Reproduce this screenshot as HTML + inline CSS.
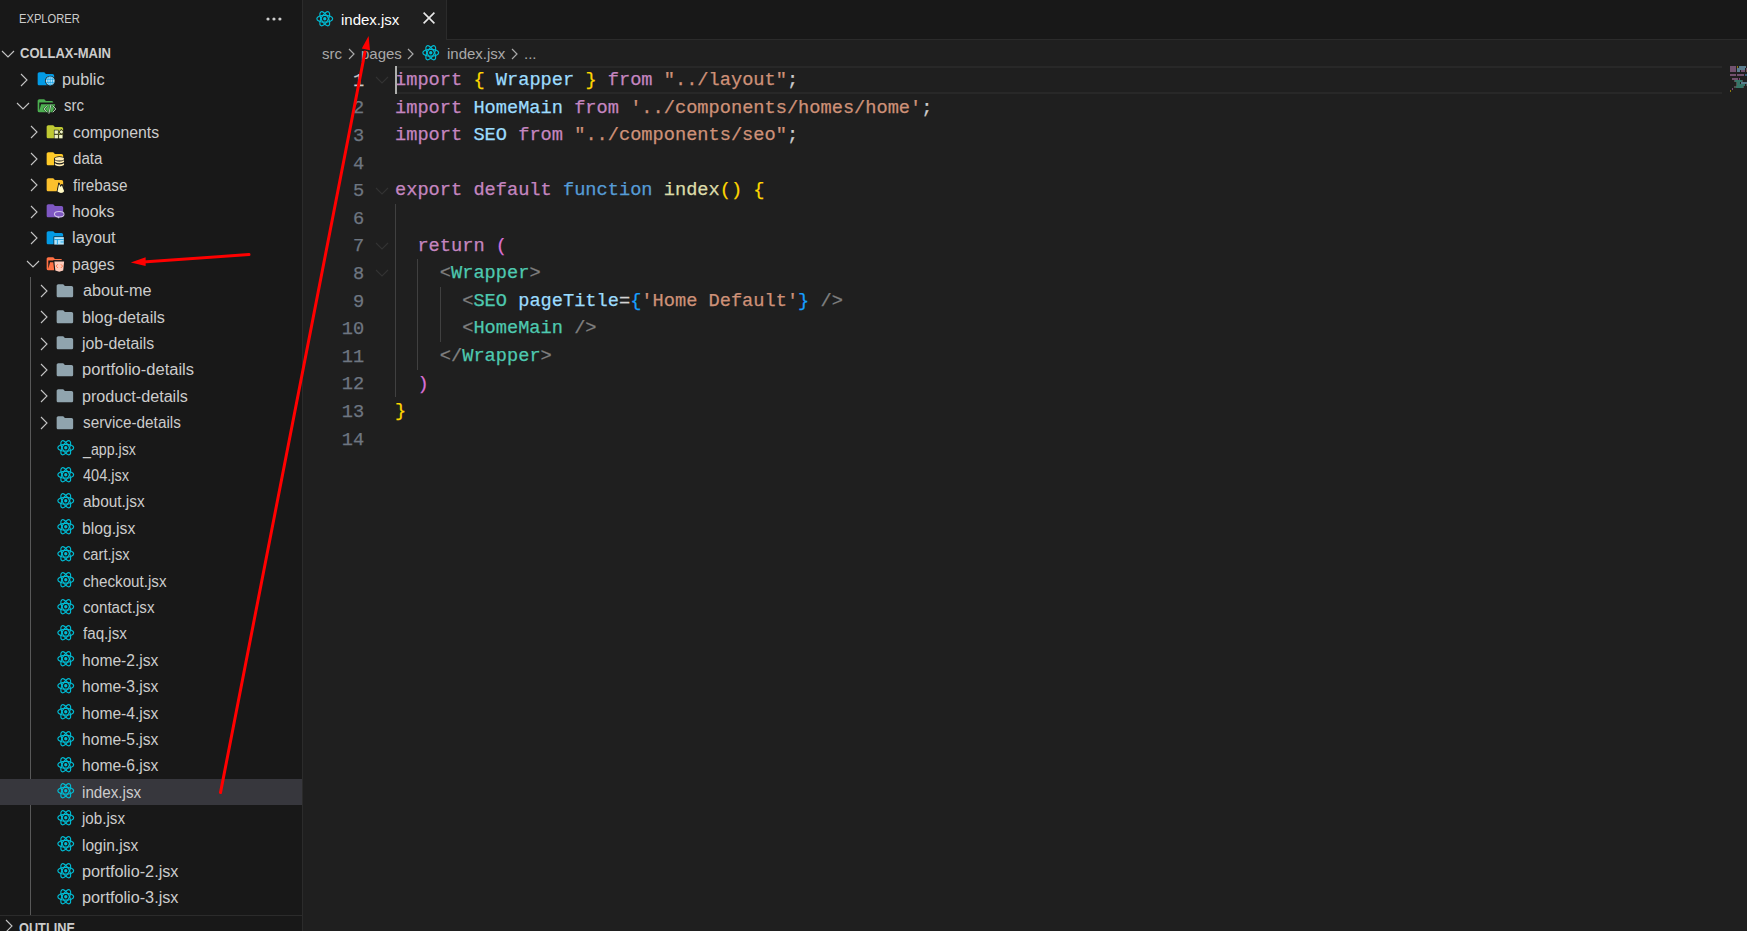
<!DOCTYPE html>
<html><head><meta charset="utf-8"><style>
html,body{margin:0;padding:0;width:1747px;height:931px;overflow:hidden;background:#1F1F1F;}
body{position:relative;font-family:"Liberation Sans",sans-serif;}
.ic{position:absolute;display:block;overflow:visible;}
#side{position:absolute;left:0;top:0;width:302px;height:931px;background:#181818;border-right:1px solid #2B2B2B;overflow:hidden;}
.t{position:absolute;height:26.4px;line-height:26.4px;font-size:16px;color:#CCCCCC;white-space:nowrap;transform-origin:0 0;}
.sel{position:absolute;left:0;width:302px;height:26.4px;background:#37373D;}
#hdr{position:absolute;top:9.4px;font-size:12.5px;color:#CCCCCC;line-height:20px;transform-origin:0 0;white-space:nowrap;}
#root{position:absolute;top:42.3px;font-size:14px;font-weight:bold;color:#CCCCCC;line-height:22px;transform-origin:0 0;white-space:nowrap;}
#outline{position:absolute;left:0;top:915px;width:302px;height:16px;border-top:1px solid #2B2B2B;}
#tabs{position:absolute;left:303px;top:0;right:0;height:39px;background:#181818;border-bottom:1px solid #2B2B2B;}
#tab{position:absolute;left:303px;top:0;width:143px;height:40px;background:#1F1F1F;border-right:1px solid #2B2B2B;}
.bc{position:absolute;top:43px;line-height:22px;font-size:15px;color:#A9A9A9;white-space:nowrap;}
.cl{position:absolute;left:395px;height:27.6px;line-height:27.6px;font-family:"Liberation Mono",monospace;font-size:18.67px;white-space:pre;padding-top:0.9px;box-sizing:border-box;-webkit-text-stroke:0.25px currentColor;}
.ln{position:absolute;left:300px;width:64.2px;text-align:right;height:27.6px;line-height:27.6px;font-family:"Liberation Mono",monospace;font-size:18.67px;color:#6E7681;padding-top:1.5px;box-sizing:border-box;-webkit-text-stroke:0.25px currentColor;}
.ln.act{color:#CCCCCC;}
.g{position:absolute;width:1px;background:#404040;}
#curline{position:absolute;left:395px;top:66.2px;width:1327px;height:27.6px;box-sizing:border-box;border-top:2px solid #282828;border-bottom:2px solid #282828;}
#cursor{position:absolute;left:395px;top:66.2px;width:2px;height:27.6px;background:#AEAFAD;}
#mm div{position:absolute;width:1px;height:1.6px;opacity:.5;}
</style></head><body>
<div id="side">
<div id="hdr" style="left:18.91px;transform:scaleX(0.894)">EXPLORER</div>
<svg class="ic" width="20" height="6" style="left:265px;top:15.5px"><circle cx="3" cy="3" r="1.6" fill="#CCCCCC"/><circle cx="8.95" cy="3" r="1.6" fill="#CCCCCC"/><circle cx="14.9" cy="3" r="1.6" fill="#CCCCCC"/></svg>
<svg class="ic" width="16" height="12" viewBox="0 0 16 12" style="left:-0.50px;top:48.00px"><path d="M2.00 3L8 9.00L14.00 3" fill="none" stroke="#C5C5C5" stroke-width="1.1"/></svg>
<div id="root" style="left:19.8px;transform:scaleX(0.9286)">COLLAX-MAIN</div>
<div class="g" style="left:30px;top:277px;height:638px;background:#585858"></div>
<svg class="ic" width="12" height="16" viewBox="0 0 12 16" style="left:18.00px;top:71.60px"><path d="M3 2.00L9.00 8L3 14.00" fill="none" stroke="#C5C5C5" stroke-width="1.1"/></svg>
<svg class="ic" viewBox="0 0 24 24" preserveAspectRatio="none" width="19.80" height="19.50" style="left:36.35px;top:69.40px"><path d="M10 4H4c-1.11 0-2 .89-2 2v12c0 1.1.9 2 2 2h16c1.1 0 2-.9 2-2V8a2 2 0 0 0-2-2h-8l-2-2z" fill="#039BE5"/><circle cx="17.2" cy="14.6" r="6.3" fill="#181818"/><circle cx="17.2" cy="14.6" r="5.4" fill="#B3E5FC"/><g stroke="#039BE5" stroke-width="0.8" fill="none"><path d="M12 12.7h10.4M12 16.5h10.4M17.2 9.3v10.6"/><ellipse cx="17.2" cy="14.6" rx="2.9" ry="5.3"/></g></svg>
<div class="t" style="left:62.48px;top:66.90px;transform:scaleX(1.0195)">public</div>
<svg class="ic" width="16" height="12" viewBox="0 0 16 12" style="left:15.40px;top:99.70px"><path d="M2.00 3L8 9.00L14.00 3" fill="none" stroke="#C5C5C5" stroke-width="1.1"/></svg>
<svg class="ic" viewBox="0 0 24 24" preserveAspectRatio="none" width="19.80" height="19.50" style="left:36.35px;top:95.80px"><path d="M19 20H4a2 2 0 0 1-2-2V6c0-1.11.89-2 2-2h6l2 2h7a2 2 0 0 1 2 2H4v10l2.14-8h17.07l-2.28 8.5c-.23.87-1.01 1.5-1.93 1.5z" fill="#4CAF50"/><path d="M13.4 12l-3.6 4 3.6 4M20.4 12l3.6 4-3.6 4M18.2 10.2l-2.6 11.6" stroke="#181818" stroke-width="2.2" fill="none" opacity="0.6"/><path d="M13.4 12l-3.6 4 3.6 4M20.4 12l3.6 4-3.6 4M18.2 10.2l-2.6 11.6" stroke="#C8E6C9" stroke-width="1.1" fill="none"/></svg>
<div class="t" style="left:63.50px;top:93.30px;transform:scaleX(0.9381)">src</div>
<svg class="ic" width="12" height="16" viewBox="0 0 12 16" style="left:28.00px;top:124.40px"><path d="M3 2.00L9.00 8L3 14.00" fill="none" stroke="#C5C5C5" stroke-width="1.1"/></svg>
<svg class="ic" viewBox="0 0 24 24" preserveAspectRatio="none" width="19.80" height="19.50" style="left:45.45px;top:122.20px"><path d="M10 4H4c-1.11 0-2 .89-2 2v12c0 1.1.9 2 2 2h16c1.1 0 2-.9 2-2V8a2 2 0 0 0-2-2h-8l-2-2z" fill="#C0CA33"/><g fill="#181818"><rect x="10.8" y="9.6" width="5.6" height="5.6"/><rect x="10.8" y="15.2" width="5.6" height="5.6"/><rect x="16.4" y="15.2" width="6.4" height="5.6"/><path d="M19.8 8.6l3.6 3.6-3.6 3.6-3.6-3.6z"/></g><g fill="#F0F4C3"><rect x="11.5" y="10.3" width="4.2" height="4.2"/><rect x="11.5" y="15.9" width="4.2" height="4.2"/><rect x="17.1" y="15.9" width="4.2" height="4.2"/><path d="M19.8 9.8l2.4 2.4-2.4 2.4-2.4-2.4z"/></g></svg>
<div class="t" style="left:72.80px;top:119.70px;transform:scaleX(0.9874)">components</div>
<svg class="ic" width="12" height="16" viewBox="0 0 12 16" style="left:28.00px;top:150.80px"><path d="M3 2.00L9.00 8L3 14.00" fill="none" stroke="#C5C5C5" stroke-width="1.1"/></svg>
<svg class="ic" viewBox="0 0 24 24" preserveAspectRatio="none" width="19.80" height="19.50" style="left:45.45px;top:148.60px"><path d="M10 4H4c-1.11 0-2 .89-2 2v12c0 1.1.9 2 2 2h16c1.1 0 2-.9 2-2V8a2 2 0 0 0-2-2h-8l-2-2z" fill="#FFCA28"/><g fill="#181818"><ellipse cx="17.5" cy="12" rx="6.6" ry="3.2"/><rect x="10.9" y="12" width="13.2" height="9"/><ellipse cx="17.5" cy="21" rx="6.6" ry="3.2"/></g><g fill="#FFECB3"><ellipse cx="17.5" cy="12" rx="5.6" ry="2.3"/><path d="M11.9 13.9q5.6 3.2 11.2 0v2q-5.6 3.2-11.2 0z"/><path d="M11.9 17.6q5.6 3.2 11.2 0v2q-5.6 3.2-11.2 0z"/></g></svg>
<div class="t" style="left:72.80px;top:146.10px;transform:scaleX(0.9438)">data</div>
<svg class="ic" width="12" height="16" viewBox="0 0 12 16" style="left:28.00px;top:177.20px"><path d="M3 2.00L9.00 8L3 14.00" fill="none" stroke="#C5C5C5" stroke-width="1.1"/></svg>
<svg class="ic" viewBox="0 0 24 24" preserveAspectRatio="none" width="19.80" height="19.50" style="left:45.45px;top:175.00px"><path d="M10 4H4c-1.11 0-2 .89-2 2v12c0 1.1.9 2 2 2h16c1.1 0 2-.9 2-2V8a2 2 0 0 0-2-2h-8l-2-2z" fill="#FBC02D"/><path d="M14.6 20.8L16.8 9.6l2.2 4 1.6-2.4 3.2 8.4q-1 2.4-4.4 2.6q-2.4 0-4.8-1.4z" fill="#181818" stroke="#181818" stroke-width="1.2" stroke-linejoin="round"/><path d="M15.2 20.4l1.8-9.2 2 3.6 1.5-2.2 2.7 7.3q-0.9 2-3.8 2.2q-2 0-4.2-1.7z" fill="#FFF9C4"/></svg>
<div class="t" style="left:72.80px;top:172.50px;transform:scaleX(0.9561)">firebase</div>
<svg class="ic" width="12" height="16" viewBox="0 0 12 16" style="left:28.00px;top:203.60px"><path d="M3 2.00L9.00 8L3 14.00" fill="none" stroke="#C5C5C5" stroke-width="1.1"/></svg>
<svg class="ic" viewBox="0 0 24 24" preserveAspectRatio="none" width="19.80" height="19.50" style="left:45.45px;top:201.40px"><path d="M10 4H4c-1.11 0-2 .89-2 2v12c0 1.1.9 2 2 2h16c1.1 0 2-.9 2-2V8a2 2 0 0 0-2-2h-8l-2-2z" fill="#7E57C2"/><ellipse cx="17.2" cy="16.4" rx="5.8" ry="3.4" fill="none" stroke="#D1C4E9" stroke-width="1.3"/><path d="M15.6 19.4l1.6 1.8" stroke="#D1C4E9" stroke-width="1.3"/></svg>
<div class="t" style="left:71.80px;top:198.90px;transform:scaleX(0.9952)">hooks</div>
<svg class="ic" width="12" height="16" viewBox="0 0 12 16" style="left:28.00px;top:230.00px"><path d="M3 2.00L9.00 8L3 14.00" fill="none" stroke="#C5C5C5" stroke-width="1.1"/></svg>
<svg class="ic" viewBox="0 0 24 24" preserveAspectRatio="none" width="19.80" height="19.50" style="left:45.45px;top:227.80px"><path d="M10 4H4c-1.11 0-2 .89-2 2v12c0 1.1.9 2 2 2h16c1.1 0 2-.9 2-2V8a2 2 0 0 0-2-2h-8l-2-2z" fill="#039BE5"/><rect x="10.4" y="10.4" width="13.2" height="10.8" fill="#181818"/><rect x="11.2" y="11.2" width="11.6" height="9.2" fill="#B3E5FC"/><path d="M11.2 14.2h11.6M15 14.2v6.2M18.8 17.2h4" stroke="#039BE5" stroke-width="1"/></svg>
<div class="t" style="left:71.78px;top:225.30px;transform:scaleX(1.0214)">layout</div>
<svg class="ic" width="16" height="12" viewBox="0 0 16 12" style="left:25.40px;top:258.10px"><path d="M2.00 3L8 9.00L14.00 3" fill="none" stroke="#C5C5C5" stroke-width="1.1"/></svg>
<svg class="ic" viewBox="0 0 24 24" preserveAspectRatio="none" width="19.80" height="19.50" style="left:45.45px;top:254.20px"><path d="M19 20H4a2 2 0 0 1-2-2V6c0-1.11.89-2 2-2h6l2 2h7a2 2 0 0 1 2 2H4v10l2.14-8h17.07l-2.28 8.5c-.23.87-1.01 1.5-1.93 1.5z" fill="#FF7043"/><path d="M10.6 8.4h13.4l-1.3 12.4-5.4 1.8-5.4-1.8z" fill="#181818" stroke="#181818" stroke-width="1.4" stroke-linejoin="round"/><path d="M11.4 9.1h11.8l-1.1 11.1-4.8 1.6-4.8-1.6z" fill="#FFCCBC"/><path d="M15.6 12.6l-2.2 2.3 2.2 2.3M19.2 12.6l2.2 2.3-2.2 2.3" stroke="#FF7043" stroke-width="1.1" fill="none"/></svg>
<div class="t" style="left:71.82px;top:251.70px;transform:scaleX(0.9786)">pages</div>
<svg class="ic" width="12" height="16" viewBox="0 0 12 16" style="left:38.00px;top:282.80px"><path d="M3 2.00L9.00 8L3 14.00" fill="none" stroke="#C5C5C5" stroke-width="1.1"/></svg>
<svg class="ic" viewBox="0 0 24 24" preserveAspectRatio="none" width="19.80" height="19.50" style="left:55.45px;top:280.60px"><path d="M10 4H4c-1.11 0-2 .89-2 2v12c0 1.1.9 2 2 2h16c1.1 0 2-.9 2-2V8a2 2 0 0 0-2-2h-8l-2-2z" fill="#90A4AE"/></svg>
<div class="t" style="left:82.70px;top:278.10px;transform:scaleX(1.0134)">about-me</div>
<svg class="ic" width="12" height="16" viewBox="0 0 12 16" style="left:38.00px;top:309.20px"><path d="M3 2.00L9.00 8L3 14.00" fill="none" stroke="#C5C5C5" stroke-width="1.1"/></svg>
<svg class="ic" viewBox="0 0 24 24" preserveAspectRatio="none" width="19.80" height="19.50" style="left:55.45px;top:307.00px"><path d="M10 4H4c-1.11 0-2 .89-2 2v12c0 1.1.9 2 2 2h16c1.1 0 2-.9 2-2V8a2 2 0 0 0-2-2h-8l-2-2z" fill="#90A4AE"/></svg>
<div class="t" style="left:81.69px;top:304.50px;transform:scaleX(1.0136)">blog-details</div>
<svg class="ic" width="12" height="16" viewBox="0 0 12 16" style="left:38.00px;top:335.60px"><path d="M3 2.00L9.00 8L3 14.00" fill="none" stroke="#C5C5C5" stroke-width="1.1"/></svg>
<svg class="ic" viewBox="0 0 24 24" preserveAspectRatio="none" width="19.80" height="19.50" style="left:55.45px;top:333.40px"><path d="M10 4H4c-1.11 0-2 .89-2 2v12c0 1.1.9 2 2 2h16c1.1 0 2-.9 2-2V8a2 2 0 0 0-2-2h-8l-2-2z" fill="#90A4AE"/></svg>
<div class="t" style="left:82.49px;top:330.90px;transform:scaleX(0.9905)">job-details</div>
<svg class="ic" width="12" height="16" viewBox="0 0 12 16" style="left:38.00px;top:362.00px"><path d="M3 2.00L9.00 8L3 14.00" fill="none" stroke="#C5C5C5" stroke-width="1.1"/></svg>
<svg class="ic" viewBox="0 0 24 24" preserveAspectRatio="none" width="19.80" height="19.50" style="left:55.45px;top:359.80px"><path d="M10 4H4c-1.11 0-2 .89-2 2v12c0 1.1.9 2 2 2h16c1.1 0 2-.9 2-2V8a2 2 0 0 0-2-2h-8l-2-2z" fill="#90A4AE"/></svg>
<div class="t" style="left:81.67px;top:357.30px;transform:scaleX(1.0327)">portfolio-details</div>
<svg class="ic" width="12" height="16" viewBox="0 0 12 16" style="left:38.00px;top:388.40px"><path d="M3 2.00L9.00 8L3 14.00" fill="none" stroke="#C5C5C5" stroke-width="1.1"/></svg>
<svg class="ic" viewBox="0 0 24 24" preserveAspectRatio="none" width="19.80" height="19.50" style="left:55.45px;top:386.20px"><path d="M10 4H4c-1.11 0-2 .89-2 2v12c0 1.1.9 2 2 2h16c1.1 0 2-.9 2-2V8a2 2 0 0 0-2-2h-8l-2-2z" fill="#90A4AE"/></svg>
<div class="t" style="left:81.69px;top:383.70px;transform:scaleX(1.0087)">product-details</div>
<svg class="ic" width="12" height="16" viewBox="0 0 12 16" style="left:38.00px;top:414.80px"><path d="M3 2.00L9.00 8L3 14.00" fill="none" stroke="#C5C5C5" stroke-width="1.1"/></svg>
<svg class="ic" viewBox="0 0 24 24" preserveAspectRatio="none" width="19.80" height="19.50" style="left:55.45px;top:412.60px"><path d="M10 4H4c-1.11 0-2 .89-2 2v12c0 1.1.9 2 2 2h16c1.1 0 2-.9 2-2V8a2 2 0 0 0-2-2h-8l-2-2z" fill="#90A4AE"/></svg>
<div class="t" style="left:82.70px;top:410.10px;transform:scaleX(0.9569)">service-details</div>
<svg class="ic" viewBox="0 0 32 32" width="19.50" height="19.50" style="left:55.75px;top:438.25px"><g fill="none" stroke="#00BCD4" stroke-width="1.9"><ellipse cx="16" cy="16" rx="13" ry="5.6"/><ellipse cx="16" cy="16" rx="13" ry="5.6" transform="rotate(60 16 16)"/><ellipse cx="16" cy="16" rx="13" ry="5.6" transform="rotate(120 16 16)"/></g><circle cx="16" cy="16" r="2.7" fill="#00BCD4"/></svg>
<div class="t" style="left:83.49px;top:436.50px;transform:scaleX(0.8869)">_app.jsx</div>
<svg class="ic" viewBox="0 0 32 32" width="19.50" height="19.50" style="left:55.75px;top:464.65px"><g fill="none" stroke="#00BCD4" stroke-width="1.9"><ellipse cx="16" cy="16" rx="13" ry="5.6"/><ellipse cx="16" cy="16" rx="13" ry="5.6" transform="rotate(60 16 16)"/><ellipse cx="16" cy="16" rx="13" ry="5.6" transform="rotate(120 16 16)"/></g><circle cx="16" cy="16" r="2.7" fill="#00BCD4"/></svg>
<div class="t" style="left:82.60px;top:462.90px;transform:scaleX(0.9098)">404.jsx</div>
<svg class="ic" viewBox="0 0 32 32" width="19.50" height="19.50" style="left:55.75px;top:491.05px"><g fill="none" stroke="#00BCD4" stroke-width="1.9"><ellipse cx="16" cy="16" rx="13" ry="5.6"/><ellipse cx="16" cy="16" rx="13" ry="5.6" transform="rotate(60 16 16)"/><ellipse cx="16" cy="16" rx="13" ry="5.6" transform="rotate(120 16 16)"/></g><circle cx="16" cy="16" r="2.7" fill="#00BCD4"/></svg>
<div class="t" style="left:82.60px;top:489.30px;transform:scaleX(0.9625)">about.jsx</div>
<svg class="ic" viewBox="0 0 32 32" width="19.50" height="19.50" style="left:55.75px;top:517.45px"><g fill="none" stroke="#00BCD4" stroke-width="1.9"><ellipse cx="16" cy="16" rx="13" ry="5.6"/><ellipse cx="16" cy="16" rx="13" ry="5.6" transform="rotate(60 16 16)"/><ellipse cx="16" cy="16" rx="13" ry="5.6" transform="rotate(120 16 16)"/></g><circle cx="16" cy="16" r="2.7" fill="#00BCD4"/></svg>
<div class="t" style="left:81.62px;top:515.70px;transform:scaleX(0.983)">blog.jsx</div>
<svg class="ic" viewBox="0 0 32 32" width="19.50" height="19.50" style="left:55.75px;top:543.85px"><g fill="none" stroke="#00BCD4" stroke-width="1.9"><ellipse cx="16" cy="16" rx="13" ry="5.6"/><ellipse cx="16" cy="16" rx="13" ry="5.6" transform="rotate(60 16 16)"/><ellipse cx="16" cy="16" rx="13" ry="5.6" transform="rotate(120 16 16)"/></g><circle cx="16" cy="16" r="2.7" fill="#00BCD4"/></svg>
<div class="t" style="left:82.60px;top:542.10px;transform:scaleX(0.9196)">cart.jsx</div>
<svg class="ic" viewBox="0 0 32 32" width="19.50" height="19.50" style="left:55.75px;top:570.25px"><g fill="none" stroke="#00BCD4" stroke-width="1.9"><ellipse cx="16" cy="16" rx="13" ry="5.6"/><ellipse cx="16" cy="16" rx="13" ry="5.6" transform="rotate(60 16 16)"/><ellipse cx="16" cy="16" rx="13" ry="5.6" transform="rotate(120 16 16)"/></g><circle cx="16" cy="16" r="2.7" fill="#00BCD4"/></svg>
<div class="t" style="left:82.60px;top:568.50px;transform:scaleX(0.9489)">checkout.jsx</div>
<svg class="ic" viewBox="0 0 32 32" width="19.50" height="19.50" style="left:55.75px;top:596.65px"><g fill="none" stroke="#00BCD4" stroke-width="1.9"><ellipse cx="16" cy="16" rx="13" ry="5.6"/><ellipse cx="16" cy="16" rx="13" ry="5.6" transform="rotate(60 16 16)"/><ellipse cx="16" cy="16" rx="13" ry="5.6" transform="rotate(120 16 16)"/></g><circle cx="16" cy="16" r="2.7" fill="#00BCD4"/></svg>
<div class="t" style="left:82.60px;top:594.90px;transform:scaleX(0.9461)">contact.jsx</div>
<svg class="ic" viewBox="0 0 32 32" width="19.50" height="19.50" style="left:55.75px;top:623.05px"><g fill="none" stroke="#00BCD4" stroke-width="1.9"><ellipse cx="16" cy="16" rx="13" ry="5.6"/><ellipse cx="16" cy="16" rx="13" ry="5.6" transform="rotate(60 16 16)"/><ellipse cx="16" cy="16" rx="13" ry="5.6" transform="rotate(120 16 16)"/></g><circle cx="16" cy="16" r="2.7" fill="#00BCD4"/></svg>
<div class="t" style="left:82.60px;top:621.30px;transform:scaleX(0.9478)">faq.jsx</div>
<svg class="ic" viewBox="0 0 32 32" width="19.50" height="19.50" style="left:55.75px;top:649.45px"><g fill="none" stroke="#00BCD4" stroke-width="1.9"><ellipse cx="16" cy="16" rx="13" ry="5.6"/><ellipse cx="16" cy="16" rx="13" ry="5.6" transform="rotate(60 16 16)"/><ellipse cx="16" cy="16" rx="13" ry="5.6" transform="rotate(120 16 16)"/></g><circle cx="16" cy="16" r="2.7" fill="#00BCD4"/></svg>
<div class="t" style="left:81.62px;top:647.70px;transform:scaleX(0.9766)">home-2.jsx</div>
<svg class="ic" viewBox="0 0 32 32" width="19.50" height="19.50" style="left:55.75px;top:675.85px"><g fill="none" stroke="#00BCD4" stroke-width="1.9"><ellipse cx="16" cy="16" rx="13" ry="5.6"/><ellipse cx="16" cy="16" rx="13" ry="5.6" transform="rotate(60 16 16)"/><ellipse cx="16" cy="16" rx="13" ry="5.6" transform="rotate(120 16 16)"/></g><circle cx="16" cy="16" r="2.7" fill="#00BCD4"/></svg>
<div class="t" style="left:81.62px;top:674.10px;transform:scaleX(0.9766)">home-3.jsx</div>
<svg class="ic" viewBox="0 0 32 32" width="19.50" height="19.50" style="left:55.75px;top:702.25px"><g fill="none" stroke="#00BCD4" stroke-width="1.9"><ellipse cx="16" cy="16" rx="13" ry="5.6"/><ellipse cx="16" cy="16" rx="13" ry="5.6" transform="rotate(60 16 16)"/><ellipse cx="16" cy="16" rx="13" ry="5.6" transform="rotate(120 16 16)"/></g><circle cx="16" cy="16" r="2.7" fill="#00BCD4"/></svg>
<div class="t" style="left:81.62px;top:700.50px;transform:scaleX(0.9766)">home-4.jsx</div>
<svg class="ic" viewBox="0 0 32 32" width="19.50" height="19.50" style="left:55.75px;top:728.65px"><g fill="none" stroke="#00BCD4" stroke-width="1.9"><ellipse cx="16" cy="16" rx="13" ry="5.6"/><ellipse cx="16" cy="16" rx="13" ry="5.6" transform="rotate(60 16 16)"/><ellipse cx="16" cy="16" rx="13" ry="5.6" transform="rotate(120 16 16)"/></g><circle cx="16" cy="16" r="2.7" fill="#00BCD4"/></svg>
<div class="t" style="left:81.62px;top:726.90px;transform:scaleX(0.9766)">home-5.jsx</div>
<svg class="ic" viewBox="0 0 32 32" width="19.50" height="19.50" style="left:55.75px;top:755.05px"><g fill="none" stroke="#00BCD4" stroke-width="1.9"><ellipse cx="16" cy="16" rx="13" ry="5.6"/><ellipse cx="16" cy="16" rx="13" ry="5.6" transform="rotate(60 16 16)"/><ellipse cx="16" cy="16" rx="13" ry="5.6" transform="rotate(120 16 16)"/></g><circle cx="16" cy="16" r="2.7" fill="#00BCD4"/></svg>
<div class="t" style="left:81.62px;top:753.30px;transform:scaleX(0.9766)">home-6.jsx</div>
<div class="sel" style="top:778.60px"></div>
<svg class="ic" viewBox="0 0 32 32" width="19.50" height="19.50" style="left:55.75px;top:781.45px"><g fill="none" stroke="#00BCD4" stroke-width="1.9"><ellipse cx="16" cy="16" rx="13" ry="5.6"/><ellipse cx="16" cy="16" rx="13" ry="5.6" transform="rotate(60 16 16)"/><ellipse cx="16" cy="16" rx="13" ry="5.6" transform="rotate(120 16 16)"/></g><circle cx="16" cy="16" r="2.7" fill="#00BCD4"/></svg>
<div class="t" style="left:81.65px;top:779.70px;transform:scaleX(0.9508)">index.jsx</div>
<svg class="ic" viewBox="0 0 32 32" width="19.50" height="19.50" style="left:55.75px;top:807.85px"><g fill="none" stroke="#00BCD4" stroke-width="1.9"><ellipse cx="16" cy="16" rx="13" ry="5.6"/><ellipse cx="16" cy="16" rx="13" ry="5.6" transform="rotate(60 16 16)"/><ellipse cx="16" cy="16" rx="13" ry="5.6" transform="rotate(120 16 16)"/></g><circle cx="16" cy="16" r="2.7" fill="#00BCD4"/></svg>
<div class="t" style="left:82.25px;top:806.10px;transform:scaleX(0.9478)">job.jsx</div>
<svg class="ic" viewBox="0 0 32 32" width="19.50" height="19.50" style="left:55.75px;top:834.25px"><g fill="none" stroke="#00BCD4" stroke-width="1.9"><ellipse cx="16" cy="16" rx="13" ry="5.6"/><ellipse cx="16" cy="16" rx="13" ry="5.6" transform="rotate(60 16 16)"/><ellipse cx="16" cy="16" rx="13" ry="5.6" transform="rotate(120 16 16)"/></g><circle cx="16" cy="16" r="2.7" fill="#00BCD4"/></svg>
<div class="t" style="left:81.63px;top:832.50px;transform:scaleX(0.9719)">login.jsx</div>
<svg class="ic" viewBox="0 0 32 32" width="19.50" height="19.50" style="left:55.75px;top:860.65px"><g fill="none" stroke="#00BCD4" stroke-width="1.9"><ellipse cx="16" cy="16" rx="13" ry="5.6"/><ellipse cx="16" cy="16" rx="13" ry="5.6" transform="rotate(60 16 16)"/><ellipse cx="16" cy="16" rx="13" ry="5.6" transform="rotate(120 16 16)"/></g><circle cx="16" cy="16" r="2.7" fill="#00BCD4"/></svg>
<div class="t" style="left:81.59px;top:858.90px;transform:scaleX(1.0138)">portfolio-2.jsx</div>
<svg class="ic" viewBox="0 0 32 32" width="19.50" height="19.50" style="left:55.75px;top:887.05px"><g fill="none" stroke="#00BCD4" stroke-width="1.9"><ellipse cx="16" cy="16" rx="13" ry="5.6"/><ellipse cx="16" cy="16" rx="13" ry="5.6" transform="rotate(60 16 16)"/><ellipse cx="16" cy="16" rx="13" ry="5.6" transform="rotate(120 16 16)"/></g><circle cx="16" cy="16" r="2.7" fill="#00BCD4"/></svg>
<div class="t" style="left:81.59px;top:885.30px;transform:scaleX(1.0138)">portfolio-3.jsx</div>
<div id="outline"></div>
<svg class="ic" width="12" height="16" viewBox="0 0 12 16" style="left:2.60px;top:918.00px"><path d="M3 2.00L9.00 8L3 14.00" fill="none" stroke="#C5C5C5" stroke-width="1.1"/></svg>
<div style="position:absolute;left:19.2px;top:917.5px;font-size:14px;font-weight:bold;color:#CCCCCC;line-height:20px;transform:scaleX(0.91);transform-origin:0 0">OUTLINE</div>
</div>
<div id="tabs"></div>
<div id="tab"></div>
<svg class="ic" viewBox="0 0 32 32" width="19.50" height="19.50" style="left:314.75px;top:8.75px"><g fill="none" stroke="#00BCD4" stroke-width="1.9"><ellipse cx="16" cy="16" rx="13" ry="5.6"/><ellipse cx="16" cy="16" rx="13" ry="5.6" transform="rotate(60 16 16)"/><ellipse cx="16" cy="16" rx="13" ry="5.6" transform="rotate(120 16 16)"/></g><circle cx="16" cy="16" r="2.7" fill="#00BCD4"/></svg>
<div style="position:absolute;left:341px;top:8.8px;font-size:15px;line-height:22px;color:#FFFFFF">index.jsx</div>
<svg class="ic" width="14" height="14" viewBox="0 0 14 14" style="left:421.7px;top:11.3px"><path d="M1.6 1.6l10.8 10.8M12.4 1.6l-10.8 10.8" stroke="#E8E8E8" stroke-width="1.6"/></svg>
<div class="bc" style="left:322px">src</div>
<svg class="ic" width="12" height="16" viewBox="0 0 12 16" style="left:345.70px;top:46.20px"><path d="M3 3.00L8.00 8L3 13.00" fill="none" stroke="#A9A9A9" stroke-width="1.2"/></svg>
<div class="bc" style="left:361px">pages</div>
<svg class="ic" width="12" height="16" viewBox="0 0 12 16" style="left:404.80px;top:46.20px"><path d="M3 3.00L8.00 8L3 13.00" fill="none" stroke="#A9A9A9" stroke-width="1.2"/></svg>
<svg class="ic" viewBox="0 0 32 32" width="19.50" height="19.50" style="left:420.75px;top:42.75px"><g fill="none" stroke="#00BCD4" stroke-width="1.9"><ellipse cx="16" cy="16" rx="13" ry="5.6"/><ellipse cx="16" cy="16" rx="13" ry="5.6" transform="rotate(60 16 16)"/><ellipse cx="16" cy="16" rx="13" ry="5.6" transform="rotate(120 16 16)"/></g><circle cx="16" cy="16" r="2.7" fill="#00BCD4"/></svg>
<div class="bc" style="left:447px">index.jsx</div>
<svg class="ic" width="12" height="16" viewBox="0 0 12 16" style="left:509.00px;top:46.20px"><path d="M3 3.00L8.00 8L3 13.00" fill="none" stroke="#A9A9A9" stroke-width="1.2"/></svg>
<div class="bc" style="left:524px">...</div>
<div id="curline"></div>
<div class="cl" style="top:66.20px"><span style="color:#C586C0">import</span><span style="color:#CCCCCC"> </span><span style="color:#FFD700">{</span><span style="color:#CCCCCC"> </span><span style="color:#9CDCFE">Wrapper</span><span style="color:#CCCCCC"> </span><span style="color:#FFD700">}</span><span style="color:#CCCCCC"> </span><span style="color:#C586C0">from</span><span style="color:#CCCCCC"> </span><span style="color:#CE9178">"../layout"</span><span style="color:#CCCCCC">;</span></div>
<div class="ln act" style="top:66.20px">1</div>
<div class="cl" style="top:93.80px"><span style="color:#C586C0">import</span><span style="color:#CCCCCC"> </span><span style="color:#9CDCFE">HomeMain</span><span style="color:#CCCCCC"> </span><span style="color:#C586C0">from</span><span style="color:#CCCCCC"> </span><span style="color:#CE9178">'../components/homes/home'</span><span style="color:#CCCCCC">;</span></div>
<div class="ln" style="top:93.80px">2</div>
<div class="cl" style="top:121.40px"><span style="color:#C586C0">import</span><span style="color:#CCCCCC"> </span><span style="color:#9CDCFE">SEO</span><span style="color:#CCCCCC"> </span><span style="color:#C586C0">from</span><span style="color:#CCCCCC"> </span><span style="color:#CE9178">"../components/seo"</span><span style="color:#CCCCCC">;</span></div>
<div class="ln" style="top:121.40px">3</div>
<div class="cl" style="top:149.00px"></div>
<div class="ln" style="top:149.00px">4</div>
<div class="cl" style="top:176.60px"><span style="color:#C586C0">export</span><span style="color:#CCCCCC"> </span><span style="color:#C586C0">default</span><span style="color:#CCCCCC"> </span><span style="color:#569CD6">function</span><span style="color:#CCCCCC"> </span><span style="color:#DCDCAA">index</span><span style="color:#FFD700">()</span><span style="color:#CCCCCC"> </span><span style="color:#FFD700">{</span></div>
<div class="ln" style="top:176.60px">5</div>
<div class="cl" style="top:204.20px"></div>
<div class="ln" style="top:204.20px">6</div>
<div class="cl" style="top:231.80px"><span style="color:#CCCCCC">  </span><span style="color:#C586C0">return</span><span style="color:#CCCCCC"> </span><span style="color:#DA70D6">(</span></div>
<div class="ln" style="top:231.80px">7</div>
<div class="cl" style="top:259.40px"><span style="color:#CCCCCC">    </span><span style="color:#808080">&lt;</span><span style="color:#4EC9B0">Wrapper</span><span style="color:#808080">&gt;</span></div>
<div class="ln" style="top:259.40px">8</div>
<div class="cl" style="top:287.00px"><span style="color:#CCCCCC">      </span><span style="color:#808080">&lt;</span><span style="color:#4EC9B0">SEO</span><span style="color:#CCCCCC"> </span><span style="color:#9CDCFE">pageTitle</span><span style="color:#D4D4D4">=</span><span style="color:#179FFF">{</span><span style="color:#CE9178">'Home Default'</span><span style="color:#179FFF">}</span><span style="color:#CCCCCC"> </span><span style="color:#808080">/&gt;</span></div>
<div class="ln" style="top:287.00px">9</div>
<div class="cl" style="top:314.60px"><span style="color:#CCCCCC">      </span><span style="color:#808080">&lt;</span><span style="color:#4EC9B0">HomeMain</span><span style="color:#CCCCCC"> </span><span style="color:#808080">/&gt;</span></div>
<div class="ln" style="top:314.60px">10</div>
<div class="cl" style="top:342.20px"><span style="color:#CCCCCC">    </span><span style="color:#808080">&lt;/</span><span style="color:#4EC9B0">Wrapper</span><span style="color:#808080">&gt;</span></div>
<div class="ln" style="top:342.20px">11</div>
<div class="cl" style="top:369.80px"><span style="color:#CCCCCC">  </span><span style="color:#DA70D6">)</span></div>
<div class="ln" style="top:369.80px">12</div>
<div class="cl" style="top:397.40px"><span style="color:#FFD700">}</span></div>
<div class="ln" style="top:397.40px">13</div>
<div class="cl" style="top:425.00px"></div>
<div class="ln" style="top:425.00px">14</div>
<svg class="ic" width="16" height="12" viewBox="0 0 16 12" style="left:374.00px;top:74.20px"><path d="M2.00 3L8 9.00L14.00 3" fill="none" stroke="#333333" stroke-width="1.1"/></svg>
<svg class="ic" width="16" height="12" viewBox="0 0 16 12" style="left:374.00px;top:184.60px"><path d="M2.00 3L8 9.00L14.00 3" fill="none" stroke="#333333" stroke-width="1.1"/></svg>
<svg class="ic" width="16" height="12" viewBox="0 0 16 12" style="left:374.00px;top:239.80px"><path d="M2.00 3L8 9.00L14.00 3" fill="none" stroke="#333333" stroke-width="1.1"/></svg>
<svg class="ic" width="16" height="12" viewBox="0 0 16 12" style="left:374.00px;top:267.40px"><path d="M2.00 3L8 9.00L14.00 3" fill="none" stroke="#333333" stroke-width="1.1"/></svg>
<div class="g" style="left:395.00px;top:204.20px;height:193.20px"></div>
<div class="g" style="left:417.40px;top:259.40px;height:110.40px"></div>
<div class="g" style="left:439.80px;top:287.00px;height:55.20px"></div>
<div id="cursor"></div>
<div id="mm"><div style="left:1730px;top:66px;background:#C586C0"></div><div style="left:1731px;top:66px;background:#C586C0"></div><div style="left:1732px;top:66px;background:#C586C0"></div><div style="left:1733px;top:66px;background:#C586C0"></div><div style="left:1734px;top:66px;background:#C586C0"></div><div style="left:1735px;top:66px;background:#C586C0"></div><div style="left:1737px;top:66px;background:#FFD700"></div><div style="left:1739px;top:66px;background:#9CDCFE"></div><div style="left:1740px;top:66px;background:#9CDCFE"></div><div style="left:1741px;top:66px;background:#9CDCFE"></div><div style="left:1742px;top:66px;background:#9CDCFE"></div><div style="left:1743px;top:66px;background:#9CDCFE"></div><div style="left:1744px;top:66px;background:#9CDCFE"></div><div style="left:1745px;top:66px;background:#9CDCFE"></div><div style="left:1747px;top:66px;background:#FFD700"></div><div style="left:1749px;top:66px;background:#C586C0"></div><div style="left:1750px;top:66px;background:#C586C0"></div><div style="left:1751px;top:66px;background:#C586C0"></div><div style="left:1752px;top:66px;background:#C586C0"></div><div style="left:1754px;top:66px;background:#CE9178"></div><div style="left:1755px;top:66px;background:#CE9178"></div><div style="left:1756px;top:66px;background:#CE9178"></div><div style="left:1757px;top:66px;background:#CE9178"></div><div style="left:1758px;top:66px;background:#CE9178"></div><div style="left:1759px;top:66px;background:#CE9178"></div><div style="left:1760px;top:66px;background:#CE9178"></div><div style="left:1761px;top:66px;background:#CE9178"></div><div style="left:1762px;top:66px;background:#CE9178"></div><div style="left:1763px;top:66px;background:#CE9178"></div><div style="left:1764px;top:66px;background:#CE9178"></div><div style="left:1765px;top:66px;background:#CCCCCC"></div><div style="left:1730px;top:68px;background:#C586C0"></div><div style="left:1731px;top:68px;background:#C586C0"></div><div style="left:1732px;top:68px;background:#C586C0"></div><div style="left:1733px;top:68px;background:#C586C0"></div><div style="left:1734px;top:68px;background:#C586C0"></div><div style="left:1735px;top:68px;background:#C586C0"></div><div style="left:1737px;top:68px;background:#9CDCFE"></div><div style="left:1738px;top:68px;background:#9CDCFE"></div><div style="left:1739px;top:68px;background:#9CDCFE"></div><div style="left:1740px;top:68px;background:#9CDCFE"></div><div style="left:1741px;top:68px;background:#9CDCFE"></div><div style="left:1742px;top:68px;background:#9CDCFE"></div><div style="left:1743px;top:68px;background:#9CDCFE"></div><div style="left:1744px;top:68px;background:#9CDCFE"></div><div style="left:1746px;top:68px;background:#C586C0"></div><div style="left:1747px;top:68px;background:#C586C0"></div><div style="left:1748px;top:68px;background:#C586C0"></div><div style="left:1749px;top:68px;background:#C586C0"></div><div style="left:1751px;top:68px;background:#CE9178"></div><div style="left:1752px;top:68px;background:#CE9178"></div><div style="left:1753px;top:68px;background:#CE9178"></div><div style="left:1754px;top:68px;background:#CE9178"></div><div style="left:1755px;top:68px;background:#CE9178"></div><div style="left:1756px;top:68px;background:#CE9178"></div><div style="left:1757px;top:68px;background:#CE9178"></div><div style="left:1758px;top:68px;background:#CE9178"></div><div style="left:1759px;top:68px;background:#CE9178"></div><div style="left:1760px;top:68px;background:#CE9178"></div><div style="left:1761px;top:68px;background:#CE9178"></div><div style="left:1762px;top:68px;background:#CE9178"></div><div style="left:1763px;top:68px;background:#CE9178"></div><div style="left:1764px;top:68px;background:#CE9178"></div><div style="left:1765px;top:68px;background:#CE9178"></div><div style="left:1766px;top:68px;background:#CE9178"></div><div style="left:1767px;top:68px;background:#CE9178"></div><div style="left:1768px;top:68px;background:#CE9178"></div><div style="left:1769px;top:68px;background:#CE9178"></div><div style="left:1770px;top:68px;background:#CE9178"></div><div style="left:1771px;top:68px;background:#CE9178"></div><div style="left:1772px;top:68px;background:#CE9178"></div><div style="left:1773px;top:68px;background:#CE9178"></div><div style="left:1774px;top:68px;background:#CE9178"></div><div style="left:1775px;top:68px;background:#CE9178"></div><div style="left:1776px;top:68px;background:#CE9178"></div><div style="left:1777px;top:68px;background:#CCCCCC"></div><div style="left:1730px;top:70px;background:#C586C0"></div><div style="left:1731px;top:70px;background:#C586C0"></div><div style="left:1732px;top:70px;background:#C586C0"></div><div style="left:1733px;top:70px;background:#C586C0"></div><div style="left:1734px;top:70px;background:#C586C0"></div><div style="left:1735px;top:70px;background:#C586C0"></div><div style="left:1737px;top:70px;background:#9CDCFE"></div><div style="left:1738px;top:70px;background:#9CDCFE"></div><div style="left:1739px;top:70px;background:#9CDCFE"></div><div style="left:1741px;top:70px;background:#C586C0"></div><div style="left:1742px;top:70px;background:#C586C0"></div><div style="left:1743px;top:70px;background:#C586C0"></div><div style="left:1744px;top:70px;background:#C586C0"></div><div style="left:1746px;top:70px;background:#CE9178"></div><div style="left:1747px;top:70px;background:#CE9178"></div><div style="left:1748px;top:70px;background:#CE9178"></div><div style="left:1749px;top:70px;background:#CE9178"></div><div style="left:1750px;top:70px;background:#CE9178"></div><div style="left:1751px;top:70px;background:#CE9178"></div><div style="left:1752px;top:70px;background:#CE9178"></div><div style="left:1753px;top:70px;background:#CE9178"></div><div style="left:1754px;top:70px;background:#CE9178"></div><div style="left:1755px;top:70px;background:#CE9178"></div><div style="left:1756px;top:70px;background:#CE9178"></div><div style="left:1757px;top:70px;background:#CE9178"></div><div style="left:1758px;top:70px;background:#CE9178"></div><div style="left:1759px;top:70px;background:#CE9178"></div><div style="left:1760px;top:70px;background:#CE9178"></div><div style="left:1761px;top:70px;background:#CE9178"></div><div style="left:1762px;top:70px;background:#CE9178"></div><div style="left:1763px;top:70px;background:#CE9178"></div><div style="left:1764px;top:70px;background:#CE9178"></div><div style="left:1765px;top:70px;background:#CCCCCC"></div><div style="left:1730px;top:74px;background:#C586C0"></div><div style="left:1731px;top:74px;background:#C586C0"></div><div style="left:1732px;top:74px;background:#C586C0"></div><div style="left:1733px;top:74px;background:#C586C0"></div><div style="left:1734px;top:74px;background:#C586C0"></div><div style="left:1735px;top:74px;background:#C586C0"></div><div style="left:1737px;top:74px;background:#C586C0"></div><div style="left:1738px;top:74px;background:#C586C0"></div><div style="left:1739px;top:74px;background:#C586C0"></div><div style="left:1740px;top:74px;background:#C586C0"></div><div style="left:1741px;top:74px;background:#C586C0"></div><div style="left:1742px;top:74px;background:#C586C0"></div><div style="left:1743px;top:74px;background:#C586C0"></div><div style="left:1745px;top:74px;background:#569CD6"></div><div style="left:1746px;top:74px;background:#569CD6"></div><div style="left:1747px;top:74px;background:#569CD6"></div><div style="left:1748px;top:74px;background:#569CD6"></div><div style="left:1749px;top:74px;background:#569CD6"></div><div style="left:1750px;top:74px;background:#569CD6"></div><div style="left:1751px;top:74px;background:#569CD6"></div><div style="left:1752px;top:74px;background:#569CD6"></div><div style="left:1754px;top:74px;background:#DCDCAA"></div><div style="left:1755px;top:74px;background:#DCDCAA"></div><div style="left:1756px;top:74px;background:#DCDCAA"></div><div style="left:1757px;top:74px;background:#DCDCAA"></div><div style="left:1758px;top:74px;background:#DCDCAA"></div><div style="left:1759px;top:74px;background:#FFD700"></div><div style="left:1760px;top:74px;background:#FFD700"></div><div style="left:1762px;top:74px;background:#FFD700"></div><div style="left:1732px;top:78px;background:#C586C0"></div><div style="left:1733px;top:78px;background:#C586C0"></div><div style="left:1734px;top:78px;background:#C586C0"></div><div style="left:1735px;top:78px;background:#C586C0"></div><div style="left:1736px;top:78px;background:#C586C0"></div><div style="left:1737px;top:78px;background:#C586C0"></div><div style="left:1739px;top:78px;background:#DA70D6"></div><div style="left:1734px;top:80px;background:#808080"></div><div style="left:1735px;top:80px;background:#4EC9B0"></div><div style="left:1736px;top:80px;background:#4EC9B0"></div><div style="left:1737px;top:80px;background:#4EC9B0"></div><div style="left:1738px;top:80px;background:#4EC9B0"></div><div style="left:1739px;top:80px;background:#4EC9B0"></div><div style="left:1740px;top:80px;background:#4EC9B0"></div><div style="left:1741px;top:80px;background:#4EC9B0"></div><div style="left:1742px;top:80px;background:#808080"></div><div style="left:1736px;top:82px;background:#808080"></div><div style="left:1737px;top:82px;background:#4EC9B0"></div><div style="left:1738px;top:82px;background:#4EC9B0"></div><div style="left:1739px;top:82px;background:#4EC9B0"></div><div style="left:1741px;top:82px;background:#9CDCFE"></div><div style="left:1742px;top:82px;background:#9CDCFE"></div><div style="left:1743px;top:82px;background:#9CDCFE"></div><div style="left:1744px;top:82px;background:#9CDCFE"></div><div style="left:1745px;top:82px;background:#9CDCFE"></div><div style="left:1746px;top:82px;background:#9CDCFE"></div><div style="left:1747px;top:82px;background:#9CDCFE"></div><div style="left:1748px;top:82px;background:#9CDCFE"></div><div style="left:1749px;top:82px;background:#9CDCFE"></div><div style="left:1750px;top:82px;background:#D4D4D4"></div><div style="left:1751px;top:82px;background:#179FFF"></div><div style="left:1752px;top:82px;background:#CE9178"></div><div style="left:1753px;top:82px;background:#CE9178"></div><div style="left:1754px;top:82px;background:#CE9178"></div><div style="left:1755px;top:82px;background:#CE9178"></div><div style="left:1756px;top:82px;background:#CE9178"></div><div style="left:1758px;top:82px;background:#CE9178"></div><div style="left:1759px;top:82px;background:#CE9178"></div><div style="left:1760px;top:82px;background:#CE9178"></div><div style="left:1761px;top:82px;background:#CE9178"></div><div style="left:1762px;top:82px;background:#CE9178"></div><div style="left:1763px;top:82px;background:#CE9178"></div><div style="left:1764px;top:82px;background:#CE9178"></div><div style="left:1765px;top:82px;background:#CE9178"></div><div style="left:1766px;top:82px;background:#179FFF"></div><div style="left:1768px;top:82px;background:#808080"></div><div style="left:1769px;top:82px;background:#808080"></div><div style="left:1736px;top:84px;background:#808080"></div><div style="left:1737px;top:84px;background:#4EC9B0"></div><div style="left:1738px;top:84px;background:#4EC9B0"></div><div style="left:1739px;top:84px;background:#4EC9B0"></div><div style="left:1740px;top:84px;background:#4EC9B0"></div><div style="left:1741px;top:84px;background:#4EC9B0"></div><div style="left:1742px;top:84px;background:#4EC9B0"></div><div style="left:1743px;top:84px;background:#4EC9B0"></div><div style="left:1744px;top:84px;background:#4EC9B0"></div><div style="left:1746px;top:84px;background:#808080"></div><div style="left:1747px;top:84px;background:#808080"></div><div style="left:1734px;top:86px;background:#808080"></div><div style="left:1735px;top:86px;background:#808080"></div><div style="left:1736px;top:86px;background:#4EC9B0"></div><div style="left:1737px;top:86px;background:#4EC9B0"></div><div style="left:1738px;top:86px;background:#4EC9B0"></div><div style="left:1739px;top:86px;background:#4EC9B0"></div><div style="left:1740px;top:86px;background:#4EC9B0"></div><div style="left:1741px;top:86px;background:#4EC9B0"></div><div style="left:1742px;top:86px;background:#4EC9B0"></div><div style="left:1743px;top:86px;background:#808080"></div><div style="left:1732px;top:88px;background:#DA70D6"></div><div style="left:1730px;top:90px;background:#FFD700"></div></div>
<svg class="ic" width="1747" height="931" style="left:0;top:0">
<g stroke="#FF0000" stroke-width="3" stroke-linecap="round" fill="none"><path d="M220.5 792.6L365 52"/><path d="M249 254.6L143 262"/></g>
<path d="M368.6 36L361.8 48.4L370 50.3z" fill="#FF0000"/>
<path d="M130.8 262.4L145.6 257.2L145.6 266z" fill="#FF0000"/>
</svg>
</body></html>
